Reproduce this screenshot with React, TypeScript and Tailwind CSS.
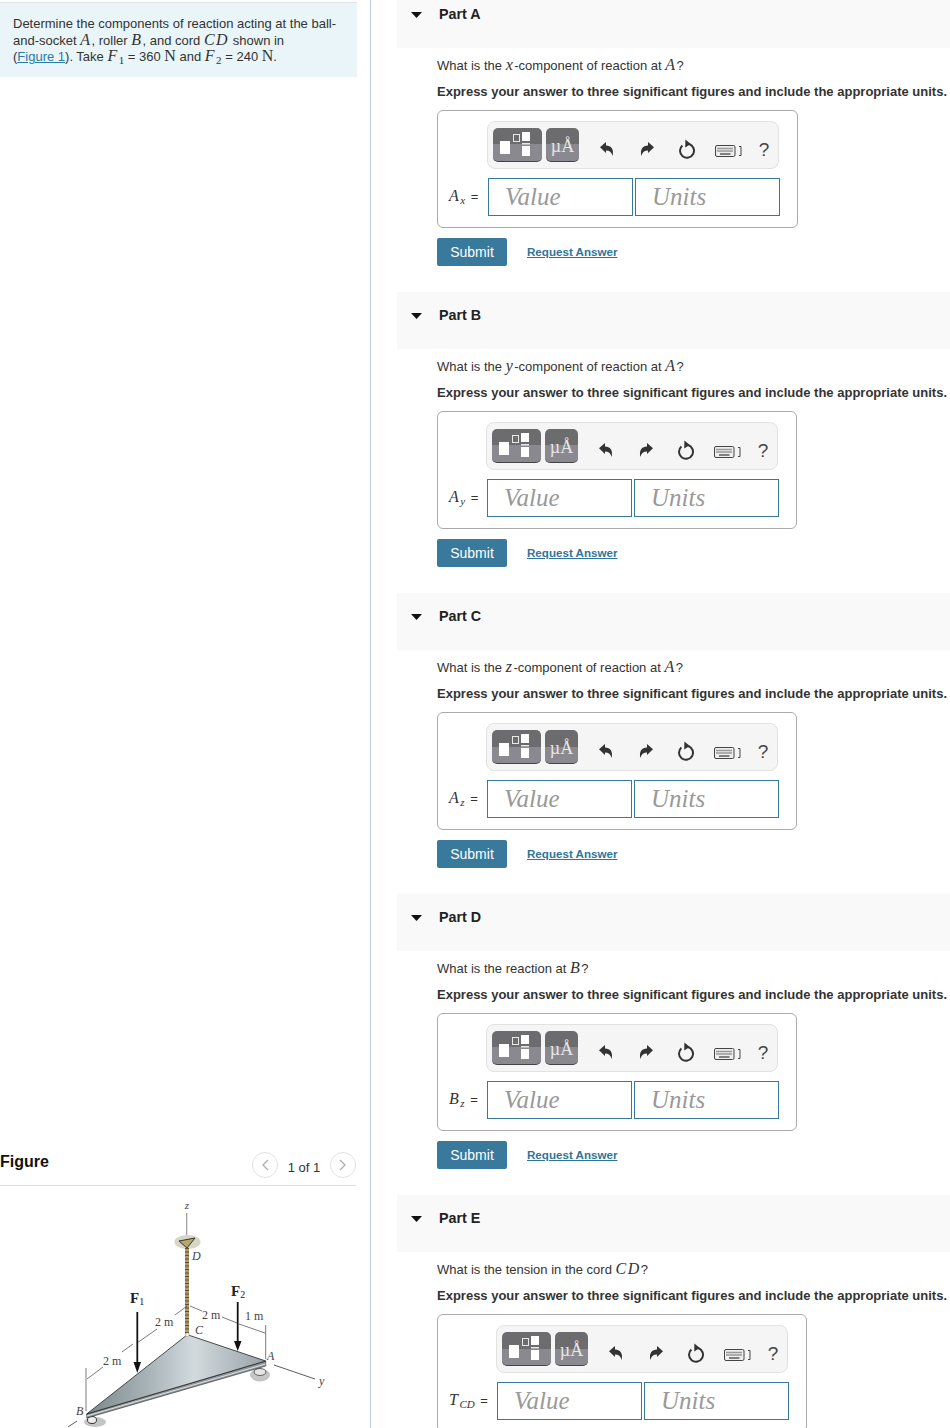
import React from "react"

const Var = ({ children }: { children: React.ReactNode }) => (
  <span className="font-['Liberation_Serif',serif] italic text-[16px] tracking-[1.5px] leading-none">{children}</span>
)

const Sub = ({ children, italic = false }: { children: React.ReactNode; italic?: boolean }) => (
  <sub className={`align-baseline relative top-[3px] text-[11px] leading-none font-['Liberation_Serif',serif] ${italic ? "italic" : ""}`}>{children}</sub>
)

const Newton = () => <span className="font-['Liberation_Serif',serif] text-[16px] leading-none">N</span>

const TemplateButton = () => (
  <div className="w-[49px] h-[34px] shrink-0 rounded-[5px] border-b border-[#444] bg-[linear-gradient(#6c6b6d_0,#6c6b6d_50%,#8a898f_50%,#8a898f_100%)]">
    <svg width="49" height="34" viewBox="0 0 49 34">
      <rect x="7" y="13" width="10" height="13" fill="#fff" />
      <rect x="20.5" y="6.5" width="6" height="7" fill="none" stroke="#e8e8e8" />
      <rect x="29" y="4" width="8" height="9" fill="#fff" />
      <rect x="29" y="15" width="8" height="1.5" fill="#e8e8e8" />
      <rect x="29" y="18" width="8" height="10" fill="#fff" />
    </svg>
  </div>
)

const UnitsButton = () => (
  <div className="w-[33px] h-[34px] shrink-0 rounded-[5px] border-b border-[#444] pt-[3px] bg-[linear-gradient(#6c6b6d_0,#6c6b6d_50%,#8a898f_50%,#8a898f_100%)] flex items-center justify-center text-[#e6e6e6] font-['Liberation_Serif',serif] text-[18px] leading-none">
    µÅ
  </div>
)

const Undo = () => (
  <svg width="16" height="16" viewBox="0 0 16 16">
    <path d="M1 6.2 L7 1 V4.4 C12.2 4.4 15.2 8 13.6 15 C12.6 11.4 10.6 9.6 7 9.6 V12 Z" fill="#333" />
  </svg>
)

const Redo = () => (
  <svg width="16" height="16" viewBox="0 0 16 16">
    <path d="M15 6.2 L9 1 V4.4 C3.8 4.4 0.8 8 2.4 15 C3.4 11.4 5.4 9.6 9 9.6 V12 Z" fill="#333" />
  </svg>
)

const Reset = () => (
  <svg width="18" height="20" viewBox="0 0 18 20">
    <path d="M4.4 6.4 A7 7 0 1 0 11 5" fill="none" stroke="#333" strokeWidth="2" />
    <path d="M7.4 0.6 L12.8 5 L7.2 8.6 Z" fill="#333" />
  </svg>
)

const Keyboard = () => (
  <svg width="27" height="12" viewBox="0 0 27 12">
    <rect x="0.5" y="0.5" width="19.5" height="11" rx="1.5" fill="#eee" stroke="#444" />
    <path d="M2.5 3.5 H18 M2.5 6 H18" stroke="#444" strokeWidth="1.3" strokeDasharray="1 1" />
    <path d="M5 9 H15.5" stroke="#444" strokeWidth="1.3" />
    <path d="M24 1.5 H26 V10.5 H24" fill="none" stroke="#444" />
  </svg>
)

const Toolbar = () => (
  <div className="w-[292px] h-[48px] rounded-lg border border-[#e2e2e2] bg-[#f5f5f5] flex items-center pl-[5px] text-[#444]">
    <TemplateButton />
    <div className="ml-1">
      <UnitsButton />
    </div>
    <div className="ml-2 mt-2 w-10 flex justify-center"><Undo /></div>
    <div className="mt-2 w-10 flex justify-center"><Redo /></div>
    <div className="mt-[7px] w-[39px] flex justify-center"><Reset /></div>
    <div className="ml-[9px] mt-[12px] flex"><Keyboard /></div>
    <div className="ml-[11px] mt-2 w-[22px] text-center text-[19px] leading-none">?</div>
  </div>
)

type PartProps = {
  letter: string
  question: React.ReactNode
  label: React.ReactNode
  labelClass: string
  toolbarClass: string
  actions?: boolean
}

const Part = ({ letter, question, label, labelClass, toolbarClass, actions = true }: PartProps) => (
  <section className="h-[301px]">
    <div className="h-[57px] bg-[#f9f9f9] flex items-center pl-[14px] gap-[17px] pb-[10px]">
      <svg width="11" height="6" viewBox="0 0 11 6"><path d="M0 0 H11 L5.5 6 Z" fill="#111" /></svg>
      <h3 className="font-bold text-[14.3px] text-[#222]">Part {letter}</h3>
    </div>
    <div className="pl-10">
      <p className="mt-[9px] h-4 leading-4 text-[13px] text-[#333] whitespace-nowrap">{question}</p>
      <p className="mt-[11px] h-4 leading-4 text-[13px] font-bold text-[#333] whitespace-nowrap">
        Express your answer to three significant figures and include the appropriate units.
      </p>
      <div className="mt-[10px] w-fit rounded-md border border-[#aaa] pl-[11px] pr-[17px] pt-[10px] pb-[11px]">
        <div className={toolbarClass}>
          <Toolbar />
        </div>
        <div className="mt-[9px] flex items-center">
          <div className={`text-[#333] text-[13px] whitespace-nowrap ${labelClass}`}>{label}</div>
          <input placeholder="Value" className="w-[145px] h-[38px] border border-[#37799c] pl-[16px] font-['Liberation_Serif',serif] italic text-[25px] placeholder:text-[#999]" />
          <input placeholder="Units" className="ml-[2px] w-[145px] h-[38px] border border-[#37799c] pl-[16px] font-['Liberation_Serif',serif] italic text-[25px] placeholder:text-[#999]" />
        </div>
      </div>
      {actions && (
        <div className="mt-[10px] flex items-center gap-5">
          <button className="w-[70px] h-[28px] rounded-[2px] bg-[#38799c] text-white text-[14px]">Submit</button>
          <a className="text-[11.6px] font-bold text-[#2f7599] underline">Request Answer</a>
        </div>
      )}
    </div>
  </section>
)

const Figure = () => (
  <svg width="290" height="238" viewBox="60 1190 290 238" className="ml-[60px] mt-[3px] block">
    <defs>
      <linearGradient id="plate" x1="0" x2="1" y1="0" y2="0">
        <stop offset="0" stopColor="#7d888d" />
        <stop offset="0.35" stopColor="#a9b4b9" />
        <stop offset="0.6" stopColor="#d2dade" />
        <stop offset="1" stopColor="#98a2a6" />
      </linearGradient>
    </defs>
    <g fontFamily="Liberation Serif, serif" fontSize="12" fill="#444">
      <text x="187" y="1210" textAnchor="middle" fontStyle="italic" fontSize="11">z</text>
      <text x="192" y="1261" fontStyle="italic">D</text>
      <text x="195" y="1335" fontStyle="italic">C</text>
      <text x="267" y="1361" fontStyle="italic">A</text>
      <text x="76" y="1416" fontStyle="italic">B</text>
      <text x="319" y="1386" fontStyle="italic">y</text>
      <text x="155" y="1327">2 m</text>
      <text x="103" y="1366">2 m</text>
      <text x="202" y="1320">2 m</text>
      <text x="245" y="1321">1 m</text>
      <text x="130" y="1304" fontWeight="bold" fontSize="15" fill="#222">F<tspan fontSize="10" dy="2" fontWeight="normal">1</tspan></text>
      <text x="231" y="1297" fontWeight="bold" fontSize="15" fill="#222">F<tspan fontSize="10" dy="2" fontWeight="normal">2</tspan></text>
    </g>
    <line x1="186.7" y1="1214" x2="186.7" y2="1239" stroke="#999" strokeWidth="1.2" />
    <ellipse cx="187.5" cy="1243" rx="13" ry="7" fill="#d6d6c4" />
    <path d="M179 1242 L195 1239 L187 1249 Z" fill="#b7a670" stroke="#333" strokeWidth="1" />
    <line x1="187" y1="1249" x2="187" y2="1335" stroke="#b09a68" strokeWidth="4" />
    <line x1="187" y1="1249" x2="187" y2="1335" stroke="#5c5030" strokeWidth="4" strokeDasharray="1 2.5" />
    <g stroke="#444" strokeWidth="0.7" fill="none">
      <path d="M187 1307 L175 1316 M157 1330 L137 1344 M133 1345 L122 1353 M103 1368 L87 1380" />
      <path d="M190 1307 L202 1312 M222 1318 L237 1324 M239 1325 L265 1334" />
      <path d="M265.7 1326 V1360 M86 1369 V1412" />
    </g>
    <line x1="274" y1="1366" x2="315" y2="1380" stroke="#333" strokeWidth="0.8" />
    <line x1="68" y1="1428" x2="77" y2="1422" stroke="#333" strokeWidth="0.8" />
    <ellipse cx="260" cy="1376" rx="10" ry="6.5" fill="#c3c6c3" />
    <ellipse cx="260" cy="1373" rx="6" ry="3.5" fill="#e5e5e5" stroke="#444" strokeWidth="0.8" />
    <ellipse cx="95" cy="1423" rx="11" ry="5" fill="#c3c6c3" />
    <ellipse cx="92" cy="1421" rx="4.5" ry="3.5" fill="#eee" stroke="#333" strokeWidth="1" />
    <path d="M265.7 1362 V1367 L86.7 1419 V1415 Z" fill="#8e989c" stroke="#222" strokeWidth="0.6" />
    <path d="M86.7 1417 L265.7 1365" stroke="#f4f4f4" strokeWidth="0.8" />
    <path d="M187.3 1335.7 L265.7 1362 L86.7 1415 Z" fill="url(#plate)" stroke="#222" strokeWidth="0.8" />
    <circle cx="187.3" cy="1335.7" r="2" fill="#eee" stroke="#888" strokeWidth="0.5" />
    <line x1="137.3" y1="1313" x2="137.3" y2="1365" stroke="#111" strokeWidth="1.8" />
    <path d="M133.5 1363 H141 L137.3 1374 Z" fill="#111" />
    <line x1="237.7" y1="1303" x2="237.7" y2="1344" stroke="#111" strokeWidth="1.8" />
    <path d="M234 1342 H241.5 L237.7 1352 Z" fill="#111" />
  </svg>
)

const App = () => {
  return (
    <div className="w-[950px] h-[1428px] overflow-hidden flex bg-white font-['Liberation_Sans',Arial,sans-serif]">
      <aside className="w-[371px] shrink-0 border-r border-[#bccfe0] pr-[13px]">
        <div className="mt-[2px] border-t border-[#dde3e6] h-[75px] bg-[#e9f5f8] pl-[13px] pt-[13px] text-[13px] leading-4 text-[#333]">
          <div className="h-4 whitespace-nowrap">Determine the components of reaction acting at the ball-</div>
          <div className="h-4 whitespace-nowrap">and-socket <Var>A</Var>, roller <Var>B</Var>, and cord <Var>CD</Var> shown in</div>
          <div className="h-4 whitespace-nowrap">
            (<a className="text-[#2a7ba6] underline">Figure 1</a>). Take <Var>F</Var><Sub>1</Sub> = 360 <Newton /> and <Var>F</Var><Sub>2</Sub> = 240 <Newton />.
          </div>
        </div>
        <div className="mt-[1070px] mr-px h-[39px] border-b border-[#ddd] flex items-start justify-between">
          <h2 className="font-bold text-[16px] leading-[30px] text-[#111]">Figure</h2>
          <div className="mt-[5px] flex items-center text-[13px] text-[#333]">
            <span className="w-[26px] h-[26px] rounded-full border border-[#e2e2e2] flex items-center justify-center text-[#aaa]">
              <svg width="8" height="12" viewBox="0 0 8 12"><path d="M7 1 L2 6 L7 11" fill="none" stroke="#aaa" strokeWidth="1.2" /></svg>
            </span>
            <span className="w-[52px] text-center mt-[5px]">1 of 1</span>
            <span className="w-[26px] h-[26px] rounded-full border border-[#e2e2e2] flex items-center justify-center">
              <svg width="8" height="12" viewBox="0 0 8 12"><path d="M1 1 L6 6 L1 11" fill="none" stroke="#aaa" strokeWidth="1.2" /></svg>
            </span>
          </div>
        </div>
        <Figure />
      </aside>
      <main className="ml-[26px] flex-1 -mt-[9px]">
        <Part letter="A" question={<>What is the <Var>x</Var>-component of reaction at <Var>A</Var>?</>}
          label={<><Var>A</Var><Sub italic>x</Sub><span className="ml-[2px]"> =</span></>} labelClass="w-[39px]" toolbarClass="ml-[38px]" />
        <Part letter="B" question={<>What is the <Var>y</Var>-component of reaction at <Var>A</Var>?</>}
          label={<><Var>A</Var><Sub italic>y</Sub><span className="ml-[2px]"> =</span></>} labelClass="w-[38px]" toolbarClass="ml-[37px]" />
        <Part letter="C" question={<>What is the <Var>z</Var>-component of reaction at <Var>A</Var>?</>}
          label={<><Var>A</Var><Sub italic>z</Sub><span className="ml-[2px]"> =</span></>} labelClass="w-[38px]" toolbarClass="ml-[37px]" />
        <Part letter="D" question={<>What is the reaction at <Var>B</Var>?</>}
          label={<><Var>B</Var><Sub italic>z</Sub><span className="ml-[2px]"> =</span></>} labelClass="w-[38px]" toolbarClass="ml-[37px]" />
        <Part letter="E" question={<>What is the tension in the cord <Var>CD</Var>?</>} actions={false}
          label={<><Var>T</Var><Sub italic>CD</Sub><span className="ml-[2px]"> =</span></>} labelClass="w-[48px]" toolbarClass="ml-[47px]" />
      </main>
    </div>
  )
}

export default App
